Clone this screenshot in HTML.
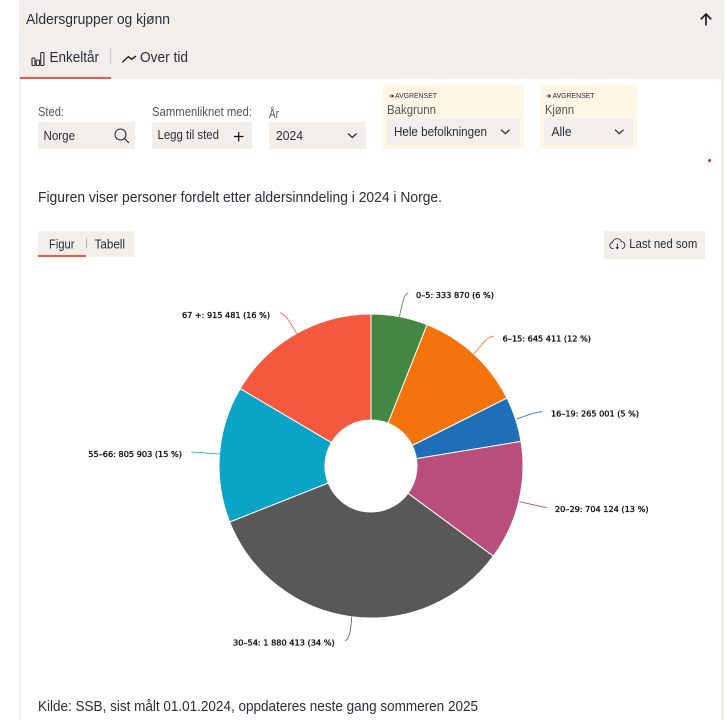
<!DOCTYPE html>
<html lang="no">
<head>
<meta charset="utf-8">
<title>Aldersgrupper og kjønn</title>
<style>
html,body{margin:0;padding:0;background:#fff;}
body{width:727px;height:720px;position:relative;overflow:hidden;filter:blur(.3px);}
.b{position:absolute;}
svg{position:absolute;left:0;top:0;}
text{font-family:"Liberation Sans",Arial,sans-serif;fill:#2b2d38;}
.l{fill:#55565e;}
.c{font-family:"DejaVu Sans",sans-serif;font-size:8px;fill:#111;stroke:#111;stroke-width:.35;}
.i{fill:none;stroke:#2b2b2b;stroke-width:1.2;}
</style>
</head>
<body>
<div class="b" style="left:19px;top:0;width:705px;height:720px;background:#f1eeeb"></div>
<div class="b" style="left:21px;top:79px;width:700px;height:641px;background:#fff"></div>
<div class="b" style="left:20px;top:77px;width:90.6px;height:2.4px;background:#f4583f"></div>
<div class="b" style="left:110px;top:48px;width:1.2px;height:16px;background:#c9c7c5"></div>
<div class="b" style="left:38px;top:122px;width:97px;height:27px;background:#f1eeeb"></div>
<div class="b" style="left:152px;top:122px;width:100px;height:27px;background:#f1eeeb"></div>
<div class="b" style="left:268.500px;top:122px;width:97.500px;height:27px;background:#f1eeeb"></div>
<div class="b" style="left:383px;top:85px;width:140.700px;height:64px;background:#fff6e5"></div>
<div class="b" style="left:387px;top:118.500px;width:132.500px;height:26.500px;background:#f1eeeb"></div>
<div class="b" style="left:540px;top:85px;width:97.300px;height:64px;background:#fff6e5"></div>
<div class="b" style="left:544px;top:118.500px;width:89px;height:26.500px;background:#f1eeeb"></div>
<div class="b" style="left:38px;top:231px;width:96px;height:26px;background:#f1eeeb"></div>
<div class="b" style="left:38px;top:254.500px;width:48px;height:2.500px;background:#f4583f"></div>
<div class="b" style="left:86px;top:238px;width:1px;height:10px;background:#b5b3b1"></div>
<div class="b" style="left:603.500px;top:231px;width:101px;height:27.500px;background:#f1eeeb"></div>
<div class="b" style="left:708px;top:159px;width:3px;height:3px;border-radius:50%;background:#e8202a"></div>

<svg width="727" height="720" viewBox="0 0 727 720" xmlns="http://www.w3.org/2000/svg">
<text x="26" y="24" font-size="14.500" textLength="144" lengthAdjust="spacingAndGlyphs">Aldersgrupper og kjønn</text>
<path class="i" style="stroke:#111;stroke-width:1.6" d="M700.800 19.300 706 14l5.200 5.300M706 14v11.500"/>

<g class="i" style="stroke-width:1.100">
<rect x="32" y="58" width="3" height="7.500" rx=".8"/>
<rect x="36.300" y="60" width="3.200" height="5.500" rx=".8"/>
<rect x="40.700" y="52.500" width="3.200" height="13" rx=".8"/>
</g>
<text x="49.500" y="62" font-size="14.500" textLength="49.500" lengthAdjust="spacingAndGlyphs">Enkeltår</text>
<path class="i" style="stroke:#111;stroke-width:1.300" d="M122.300 62.300 128.300 56.700 131.700 59.300 136 56"/>
<text x="140" y="62" font-size="14.500" textLength="48" lengthAdjust="spacingAndGlyphs">Over tid</text>

<text class="l" x="38" y="116" font-size="12.500" textLength="26" lengthAdjust="spacingAndGlyphs">Sted:</text>
<text x="43.500" y="140" font-size="12.500" textLength="31.500" lengthAdjust="spacingAndGlyphs">Norge</text>
<circle class="i" style="stroke-width:1" cx="120.500" cy="134.500" r="5.500"/>
<path class="i" d="M124.500 138.500 129 143"/>

<text class="l" x="152" y="116" font-size="12.500" textLength="100" lengthAdjust="spacingAndGlyphs">Sammenliknet med:</text>
<text x="157.500" y="139" font-size="12.500" textLength="61.500" lengthAdjust="spacingAndGlyphs">Legg til sted</text>
<path class="i" style="stroke:#111" d="M234 136.500h9.500M238.700 132v9.500"/>

<text class="l" x="269" y="118" font-size="12.500" textLength="10" lengthAdjust="spacingAndGlyphs">År</text>
<text x="276" y="140" font-size="12.500" textLength="27" lengthAdjust="spacingAndGlyphs">2024</text>
<path class="i" d="M348 133.500l4.300 4 4.300-4"/>

<path class="i" style="stroke-width:.8" d="M389 96h4.500M391.500 94.300 393.500 96l-2 1.700"/>
<text x="395" y="98" font-size="7.500" textLength="42" lengthAdjust="spacingAndGlyphs">AVGRENSET</text>
<text class="l" x="387" y="114" font-size="12.500" textLength="49" lengthAdjust="spacingAndGlyphs">Bakgrunn</text>
<text x="394" y="136" font-size="12.500" textLength="93" lengthAdjust="spacingAndGlyphs">Hele befolkningen</text>
<path class="i" d="M501 129.700l4.300 4 4.300-4"/>

<path class="i" style="stroke-width:.8" d="M546 96h4.500M548.500 94.300 550.500 96l-2 1.700"/>
<text x="552.500" y="98" font-size="7.500" textLength="42" lengthAdjust="spacingAndGlyphs">AVGRENSET</text>
<text class="l" x="545" y="114" font-size="12.500" textLength="29" lengthAdjust="spacingAndGlyphs">Kjønn</text>
<text x="551.500" y="136" font-size="12.500" textLength="20" lengthAdjust="spacingAndGlyphs">Alle</text>
<path class="i" d="M615 129.700l4.300 4 4.300-4"/>

<text x="38" y="202" font-size="14.500" textLength="404" lengthAdjust="spacingAndGlyphs">Figuren viser personer fordelt etter aldersinndeling i 2024 i Norge.</text>

<text x="49" y="248.500" font-size="12.500" textLength="25.500" lengthAdjust="spacingAndGlyphs">Figur</text>
<text x="94.500" y="248.500" font-size="12.500" textLength="30.500" lengthAdjust="spacingAndGlyphs">Tabell</text>

<path class="i" style="stroke-width:.9" d="M613.500 248.500h-.5a3 3 0 0 1-.5-6a4.700 4.700 0 0 1 9-.8a3.500 3.500 0 0 1 1 6.800h-.5M617.300 243.500v4"/>
<path d="M615.500 247.200h3.600l-1.800 2.300z" fill="#222"/>
<text x="629.300" y="248" font-size="12.500" textLength="68" lengthAdjust="spacingAndGlyphs">Last ned som</text>

<g stroke="#fff" stroke-width="1">
<path fill="#438743" d="M371 314A152 152 0 0 1 427.100 324.700L388 423.250A46 46 0 0 0 371 420Z"/>
<path fill="#f4730d" d="M427.100 324.700A152 152 0 0 1 507 398.100L412.200 445.500A46 46 0 0 0 388 423.250Z"/>
<path fill="#1f6eb8" d="M507 398.100A152 152 0 0 1 521 441.400L416.400 458.600A46 46 0 0 0 412.200 445.500Z"/>
<path fill="#b94d7c" d="M521 441.400A152 152 0 0 1 493.300 556.200L408 493.300A46 46 0 0 0 416.400 458.600Z"/>
<path fill="#585858" d="M493.300 556.200A152 152 0 0 1 229.700 522L328.200 483A46 46 0 0 0 408 493.300Z"/>
<path fill="#09a4c6" d="M229.700 522A152 152 0 0 1 240.200 388.600L331.400 442.600A46 46 0 0 0 328.200 483Z"/>
<path fill="#f4583f" d="M240.200 388.600A152 152 0 0 1 371 314L371 420A46 46 0 0 0 331.400 442.600Z"/>
</g>

<g fill="none" stroke-width=".8">
<path stroke="#438743" d="M399.300 317C402 306 403 295 408.300 292.700"/>
<path stroke="#f4730d" d="M474 354C481 346 486 337 494 336"/>
<path stroke="#1f6eb8" d="M516.700 419C526 416 534 412 542.700 411.700"/>
<path stroke="#b94d7c" d="M519.300 501.700 546.700 507.700"/>
<path stroke="#585858" d="M351.700 616.700C351 628 350 639 345 640.700"/>
<path stroke="#09a4c6" d="M220 454 191 452"/>
<path stroke="#f4583f" d="M280 312.700C287 315 291 325 297 334"/>
</g>

<text class="c" x="416" y="298" textLength="78" lengthAdjust="spacingAndGlyphs">0–5: 333 870 (6 %)</text>
<text class="c" x="502.700" y="341.500" textLength="88.300" lengthAdjust="spacingAndGlyphs">6–15: 645 411 (12 %)</text>
<text class="c" x="551" y="416.500" textLength="88" lengthAdjust="spacingAndGlyphs">16–19: 265 001 (5 %)</text>
<text class="c" x="555" y="512" textLength="93.500" lengthAdjust="spacingAndGlyphs">20–29: 704 124 (13 %)</text>
<text class="c" x="233" y="645.500" textLength="101.700" lengthAdjust="spacingAndGlyphs">30–54: 1 880 413 (34 %)</text>
<text class="c" x="88.300" y="457" textLength="93.700" lengthAdjust="spacingAndGlyphs">55–66: 805 903 (15 %)</text>
<text class="c" x="182" y="318" textLength="88" lengthAdjust="spacingAndGlyphs">67 +: 915 481 (16 %)</text>

<text x="38" y="711" font-size="14.500" textLength="440" lengthAdjust="spacingAndGlyphs">Kilde: SSB, sist målt 01.01.2024, oppdateres neste gang sommeren 2025</text>
</svg>
</body>
</html>
